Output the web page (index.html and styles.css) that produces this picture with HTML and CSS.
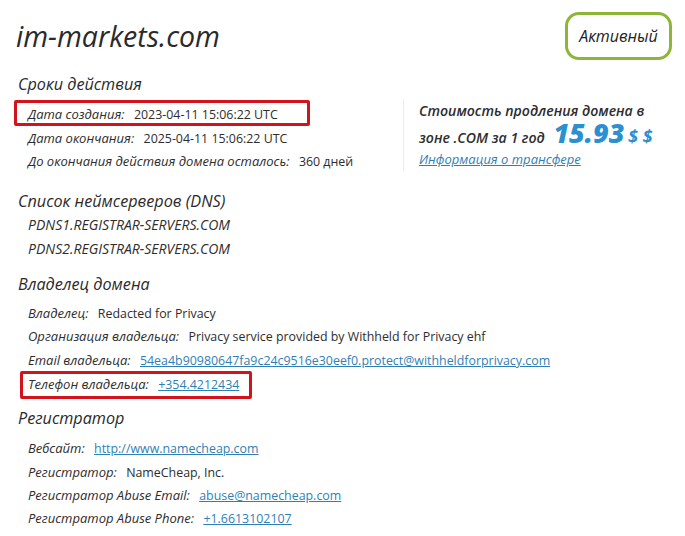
FILE: index.html
```html
<!DOCTYPE html>
<html lang="ru">
<head>
    <meta charset="UTF-8">
    <meta name="viewport" content="width=device-width, initial-scale=1.0">
    <title>im-markets.com</title>
    <link rel="stylesheet" href="styles.css">
</head>
<body>
    <div class="page">
        <div class="top">
            <h1 class="domain">im-markets.com</h1>
            <div class="status">Активный</div>
        </div>

        <div class="section first">
            <h2>Сроки действия</h2>
            <div class="split">
                <div class="rows dates">
                    <div class="row marked marked-date"><span class="label">Дата создания:</span> <span class="value">2023-04-11 15:06:22 UTC</span></div>
                    <div class="row"><span class="label">Дата окончания:</span> <span class="value">2025-04-11 15:06:22 UTC</span></div>
                    <div class="row"><span class="label">До окончания действия домена осталось:</span> <span class="value">360 дней</span></div>
                </div>
                <div class="renew">
                    <div class="renew-text">Стоимость продления домена в</div>
                    <div class="renew-text">зоне .COM за 1 год <span class="price">15.93</span> <span class="cur">$ $</span></div>
                    <a class="renew-link" href="#">Информация о трансфере</a>
                </div>
            </div>
        </div>

        <div class="section dns">
            <h2>Список неймсерверов (DNS)</h2>
            <div class="rows ns">
                <div class="row label">PDNS1.REGISTRAR-SERVERS.COM</div>
                <div class="row label">PDNS2.REGISTRAR-SERVERS.COM</div>
            </div>
        </div>

        <div class="section">
            <h2>Владелец домена</h2>
            <div class="rows owner">
                <div class="row"><span class="label">Владелец:</span> <span class="value">Redacted for Privacy</span></div>
                <div class="row"><span class="label">Организация владельца:</span> <span class="value">Privacy service provided by Withheld for Privacy ehf</span></div>
                <div class="row"><span class="label">Email владельца:</span> <a href="#">54ea4b90980647fa9c24c9516e30eef0.protect@withheldforprivacy.com</a></div>
                <div class="row marked marked-phone"><span class="label">Телефон владельца:</span> <a href="#">+354.4212434</a></div>
            </div>
        </div>

        <div class="section registrar">
            <h2>Регистратор</h2>
            <div class="rows">
                <div class="row"><span class="label">Вебсайт:</span> <a href="#">http://www.namecheap.com</a></div>
                <div class="row"><span class="label">Регистратор:</span> <span class="value">NameCheap, Inc.</span></div>
                <div class="row"><span class="label">Регистратор Abuse Email:</span> <a href="#">abuse@namecheap.com</a></div>
                <div class="row"><span class="label">Регистратор Abuse Phone:</span> <a href="#">+1.6613102107</a></div>
            </div>
        </div>
    </div>
</body>
</html>
```

FILE: styles.css
```css
body {
    margin: 0;
    background: #ffffff;
    color: #2d2d2d;
    font-family: "Open Sans", "Noto Sans", sans-serif;
    font-size: 13px;
}
.page {
    padding: 12px 13px 0 18px;
}
.top {
    display: flex;
    justify-content: space-between;
    align-items: flex-start;
    height: 60px;
}
.domain {
    margin: 8px 0 0 -2px;
    font-size: 28.5px;
    font-style: italic;
    font-weight: 500;
    line-height: 32px;
    color: #2a2a2a;
}
.status {
    width: 107px;
    height: 48px;
    box-sizing: border-box;
    border: 3px solid #8db538;
    border-radius: 14px;
    display: flex;
    align-items: center;
    justify-content: center;
    font-style: italic;
    font-size: 16px;
    font-weight: 500;
    color: #222;
}
.section {
    margin-top: 11px;
}
.section.first {
    margin-top: 0;
}
.section.dns {
    margin-top: 15px;
}
.section.registrar {
    margin-top: 10px;
}
.section h2 {
    margin: 0;
    font-size: 16.2px;
    font-style: italic;
    font-weight: 500;
    line-height: 24px;
    color: #2a2a2a;
}
.rows {
    padding: 6px 0 0 10px;
}
.rows.ns {
    padding-top: 0;
}
.rows.ns .row {
    font-size: 14px;
    line-height: 24px;
}
.rows.owner {
    padding-top: 6px;
}
.rows.owner .row {
    line-height: 23.8px;
}
.section.registrar .rows {
    padding-top: 7px;
}
.section.registrar .row {
    line-height: 23.2px;
}
.row {
    line-height: 23.5px;
    white-space: nowrap;
}
.label {
    font-style: italic;
    margin-right: 6px;
}
.value,
.row a {
    font-size: 12.4px;
}
a {
    color: #2f7fb5;
    text-decoration: underline;
}
.marked {
    display: block;
    box-sizing: border-box;
    border: 3px solid #d3131b;
    border-radius: 2px;
}
.marked-date {
    width: 296px;
    line-height: 16px;
    padding: 3px 0 0 11px;
    margin: -2.25px 0 0.75px -14px;
}
.rows.owner .marked-phone {
    width: 232px;
    height: 28px;
    line-height: 20px;
    padding: 0 0 0 5px;
    margin: -1.5px 0 -3px -8px;
}
.split {
    display: flex;
}
.dates {
    width: 375px;
}
.renew {
    margin-top: 3px;
    height: 72px;
    border-left: 1px solid #ececec;
    padding-left: 15px;
    font-style: italic;
    font-weight: 600;
    font-size: 14.1px;
}
.renew-text {
    height: 24px;
    line-height: 24px;
    white-space: nowrap;
}
.price {
    display: inline-block;
    font-size: 27px;
    font-weight: 800;
    color: #2b8fd0;
    line-height: 20px;
    margin-left: 5px;
}
.cur {
    display: inline-block;
    font-size: 18px;
    font-weight: 700;
    color: #2b8fd0;
    line-height: 20px;
}
.renew-link {
    display: block;
    font-size: 13px;
    font-weight: 400;
    line-height: 24px;
}
```
